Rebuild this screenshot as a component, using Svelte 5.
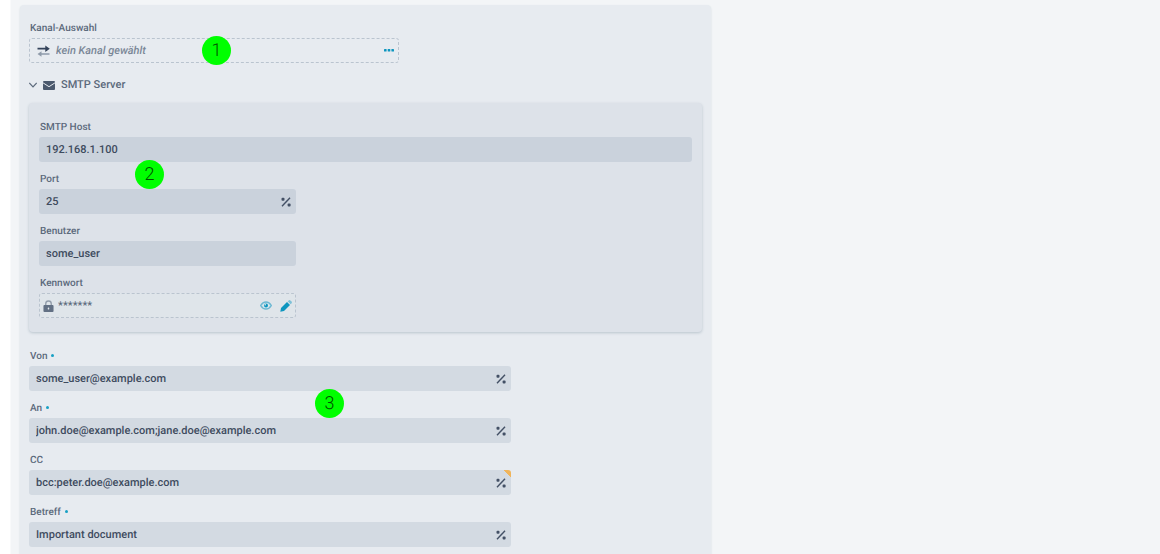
<script lang="ts">
	type Field = {
		id: string;
		label: string;
		value: string;
		required?: boolean;
		wide?: boolean;
		dynamic?: boolean;
		changed?: boolean;
		marker?: string;
	};

	let open = $state(true);
	let channel = $state('');
	let password = $state('*******');

	let serverFields: Field[] = $state([
		{ id: 'host', label: 'SMTP Host', value: '192.168.1.100', wide: true },
		{ id: 'port', label: 'Port', value: '25', dynamic: true, marker: '2' },
		{ id: 'user', label: 'Benutzer', value: 'some_user' }
	]);

	let mailFields: Field[] = $state([
		{ id: 'from', label: 'Von', value: 'some_user@example.com', required: true, dynamic: true },
		{
			id: 'to',
			label: 'An',
			value: 'john.doe@example.com;jane.doe@example.com',
			required: true,
			dynamic: true,
			marker: '3'
		},
		{ id: 'cc', label: 'CC', value: 'bcc:peter.doe@example.com', dynamic: true, changed: true },
		{ id: 'subject', label: 'Betreff', value: 'Important document', required: true, dynamic: true }
	]);
</script>

{#snippet textField(field: Field)}
	<div class="field" class:wide={field.wide}>
		<label for={field.id}>
			{field.label}
			{#if field.required}<span class="required"></span>{/if}
		</label>
		<div class="box" class:changed={field.changed}>
			<input id={field.id} type="text" bind:value={field.value} />
			{#if field.dynamic}
				<button class="icon" type="button" aria-label="Variable">
					<svg width="10" height="10" viewBox="0 0 10 10">
						<path d="M1 9.2 9 .8" stroke="currentColor" stroke-width="1.4" />
						<rect x=".5" y=".7" width="3" height="3" rx="1" fill="currentColor" />
						<rect x="6.6" y="6.4" width="3" height="3" rx="1" fill="currentColor" />
					</svg>
				</button>
			{/if}
		</div>
		{#if field.marker}
			<span class="marker marker-{field.marker}">{field.marker}</span>
		{/if}
	</div>
{/snippet}

<main>
	<form class="card">
		<div class="field channel">
			<label for="channel">Kanal-Auswahl</label>
			<div class="box dashed">
				<svg class="arrows" width="13" height="12" viewBox="0 0 13 12">
					<path d="M.5 2.8h7.8V.4l4.500 3.300-4.500 3.300V4.600H.5z" fill="#34435a" />
					<path d="M12.500 8.300H4.500V6.200L.5 9l4 2.800V9.700h8z" fill="#8f9baa" />
				</svg>
				<input
					id="channel"
					type="text"
					placeholder="kein Kanal gewählt"
					readonly
					bind:value={channel}
				/>
				<button class="icon accent" type="button" aria-label="Kanal wählen">
					<svg width="10" height="3" viewBox="0 0 10 3">
						<rect width="2.600" height="2.600" rx=".6" fill="currentColor" />
						<rect x="3.700" width="2.600" height="2.600" rx=".6" fill="currentColor" />
						<rect x="7.400" width="2.600" height="2.600" rx=".6" fill="currentColor" />
					</svg>
				</button>
			</div>
			<span class="marker marker-1">1</span>
		</div>

		<button class="toggle" type="button" aria-expanded={open} onclick={() => (open = !open)}>
			<svg class="chevron" class:closed={!open} width="8" height="6" viewBox="0 0 8 6">
				<path d="M.3 1 4 4.800 7.700 1" fill="none" stroke="currentColor" stroke-width="1.200" />
			</svg>
			<svg width="12" height="9" viewBox="0 0 12 9">
				<rect width="12" height="9" rx="1" fill="#4b596d" />
				<path d="M0 1.800 6 5.700l6-3.900" fill="none" stroke="#e7ebef" stroke-width="1" />
			</svg>
			<span>SMTP Server</span>
		</button>

		{#if open}
			<section class="server">
				{#each serverFields as field (field.id)}
					{@render textField(field)}
				{/each}
				<div class="field">
					<label for="password">Kennwort</label>
					<div class="box dashed secret">
						<svg class="lock" width="11" height="12" viewBox="0 0 12 13">
							<path
								d="M3 6V4a3 3 0 0 1 6 0v2"
								fill="none"
								stroke="#929dab"
								stroke-width="1.500"
							/>
							<rect x=".5" y="5.500" width="11" height="7.500" rx="1" fill="#627084" />
							<rect x="5.200" y="8.200" width="1.600" height="2.200" rx=".5" fill="#e4e9ed" />
						</svg>
						<input id="password" type="text" bind:value={password} />
						<button class="icon accent" type="button" aria-label="Kennwort anzeigen">
							<svg width="12" height="9" viewBox="0 0 12 9">
								<path
									d="M.7 4.500C2 2.200 3.800 1 6 1s4 1.200 5.300 3.500C10 6.800 8.200 8 6 8S2 6.800.7 4.500z"
									fill="#d9e6ec"
									stroke="#6db9d3"
									stroke-width="1.500"
								/>
								<circle cx="6" cy="4.500" r="2" fill="currentColor" />
								<circle cx="5.300" cy="3.800" r=".8" fill="#d9e6ec" />
							</svg>
						</button>
						<button class="icon accent" type="button" aria-label="Kennwort bearbeiten">
							<svg width="12" height="12" viewBox="0 0 12 12">
								<path d="M7 2 10 5 4 11 .3 11.800 1 8z" fill="currentColor" />
								<path d="M7.700 1.300 8.700.4q.9-.7 1.700 0l1.200 1.200q.6.800 0 1.700l-.9 1z" fill="#7dc0d7" />
							</svg>
						</button>
					</div>
				</div>
			</section>
		{/if}

		<section class="mail">
			{#each mailFields as field (field.id)}
				{@render textField(field)}
			{/each}
		</section>
	</form>
</main>

<style>
	:global(body) {
		background: #fff;
	}

	main {
		box-sizing: border-box;
		height: 100vh;
		margin-left: 11px;
		padding: 5px 9px 0;
		overflow: hidden;
		background: #f3f5f7;
		box-shadow: 0 0 1px #dde2e6;
		font-family: Roboto, sans-serif;
		font-size: 11px;
		font-weight: 500;
		text-rendering: geometricPrecision;
		color: #5b697b;
	}

	.card {
		box-sizing: border-box;
		max-width: 691px;
		padding: 16px 9px 20px;
		border-radius: 4px;
		background: #e7ebf0;
		box-shadow: 0 1px 2px #cfd8dd;
	}

	.field {
		position: relative;
		max-width: 257px;
	}

	.field.wide {
		max-width: none;
	}

	.field.channel {
		max-width: 370px;
	}

	.mail .field {
		max-width: 482px;
	}

	label {
		display: flex;
		align-items: center;
		gap: 4px;
		margin: 0 1px 1px;
		font-size: 10px;
		line-height: 16px;
	}

	.required {
		width: 3px;
		height: 3px;
		margin-bottom: 3px;
		border-radius: 50%;
		background: #17a0c4;
	}

	.box {
		box-sizing: border-box;
		display: flex;
		align-items: center;
		height: 25px;
		padding: 0 5px 0 7px;
		border-radius: 3px;
		background: #d3dae2;
	}

	.server .box {
		background: #cad2dc;
	}

	.box.dashed {
		gap: 6px;
		padding: 0 4px 0 7px;
		border: 1px dashed #bac4cf;
		background: transparent;
	}

	.server .box.dashed {
		gap: 4px;
		padding: 0 1px 0 3px;
		background: #dfe5ea;
	}

	.changed {
		background: linear-gradient(225deg, #f0b45a 5px, transparent 5px) #d3dae2;
	}

	input {
		flex: 1;
		min-width: 0;
		padding: 0;
		border: 0;
		outline: 0;
		background: none;
		font: inherit;
		text-rendering: inherit;
		color: #3e4b5e;
	}

	.dashed input {
		color: #5b697b;
	}

	input::placeholder {
		font-style: italic;
		color: #7a8797;
		opacity: 1;
	}

	button {
		padding: 0;
		border: 0;
		background: none;
		font: inherit;
		text-rendering: inherit;
		color: inherit;
		cursor: pointer;
	}

	.icon {
		display: flex;
		align-items: center;
		justify-content: center;
		width: 10px;
		height: 16px;
		color: #435065;
	}

	.icon.accent {
		color: #0d96bf;
	}

	.secret .icon {
		width: 16px;
	}

	.toggle {
		display: flex;
		align-items: center;
		gap: 6px;
		height: 16px;
		margin: 14px 0 10px;
		line-height: 16px;
	}

	.chevron.closed {
		transform: rotate(-90deg);
	}

	.server,
	.mail {
		display: grid;
		gap: 10px;
	}

	.server {
		margin-bottom: 17px;
		padding: 17px 10px 14px;
		border-radius: 4px;
		background: #dde2e9;
		box-shadow: 0 1px 3px #b9c4cd;
	}

	.marker {
		position: absolute;
		width: 29px;
		height: 29px;
		border-radius: 50%;
		background: #00ff00;
		font-family: Roboto, sans-serif;
		font-size: 18px;
		font-weight: 300;
		line-height: 29px;
		text-align: center;
		color: #004d00;
	}

	.marker-1 {
		top: 15px;
		left: 173px;
	}

	.marker-2 {
		top: -12px;
		left: 96px;
	}

	.marker-3 {
		top: -12px;
		left: 286px;
	}
</style>
